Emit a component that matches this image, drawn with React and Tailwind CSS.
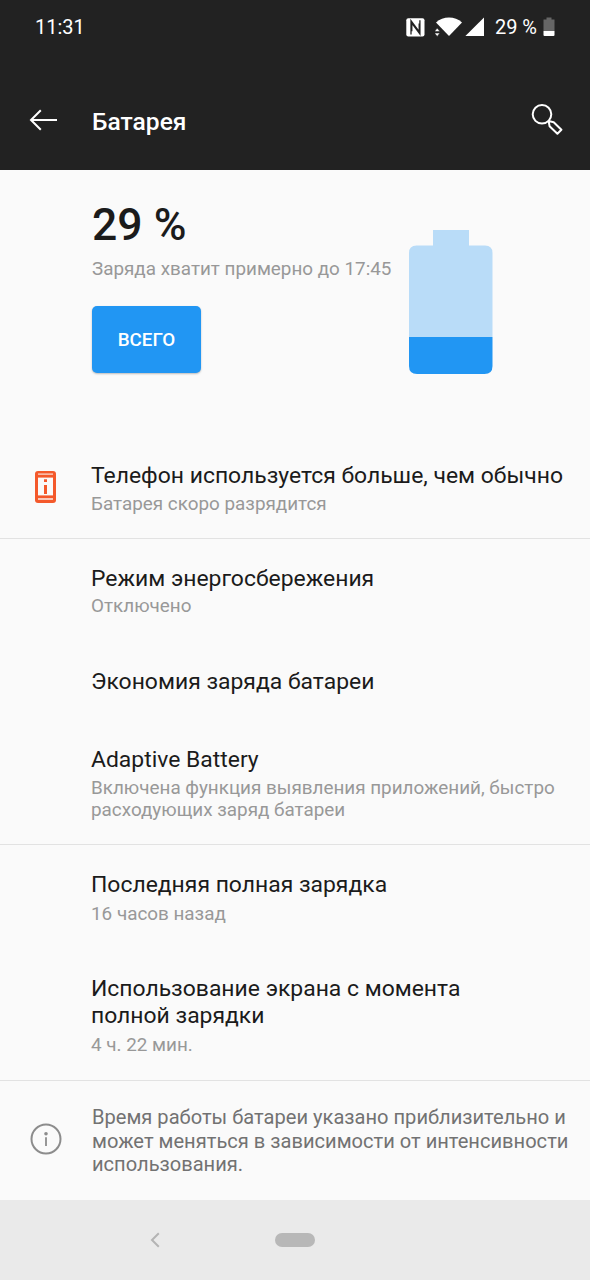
import React from "react";

const items = [
  {
    title: "Телефон используется больше, чем обычно",
    text: "Батарея скоро разрядится",
    icon: true,
    box: "h-[103px] border-b",
    textBox: "mt-[4px] leading-[22px]",
  },
  {
    title: "Режим энергосбережения",
    text: "Отключено",
    box: "h-[103px]",
    textBox: "mt-[3px] leading-[22px]",
  },
  { title: "Экономия заряда батареи", box: "h-[78px]" },
  {
    title: "Adaptive Battery",
    text: "Включена функция выявления приложений, быстро расходующих заряд батареи",
    box: "h-[125px] border-b",
    textBox: "mt-[4px] leading-[22px]",
  },
  {
    title: "Последняя полная зарядка",
    text: "16 часов назад",
    box: "h-[104px]",
    textBox: "mt-[4px] leading-[24px]",
  },
  {
    title: "Использование экрана с момента полной зарядки",
    text: "4 ч. 22 мин.",
    box: "h-[132px] border-b",
    titleBox: "w-[400px]",
    textBox: "mt-[4px] leading-[24px]",
  },
];

const StatusBar = () => (
  <div className="flex h-[54px] items-center pl-[35px] pr-[35px] text-[20px] text-white">
    <span>11:31</span>
    <svg className="ml-auto" width="19" height="19" viewBox="0 0 19 19">
      <rect x="0.3" y="0.3" width="18.2" height="18.2" rx="2" fill="#fff" />
      <path
        d="M5 16.6V2.6L13.2 13.6V5.5M13.9 2.2V16L5.8 5.2V13.2"
        fill="none"
        stroke="#222"
        strokeWidth="1.3"
      />
    </svg>
    <svg className="ml-[10px]" width="28" height="20" viewBox="0 0 28 20">
      <path d="M1 5.6C8-1.2 20-1.2 27 5.6L14 19Z" fill="#fff" />
      <path
        d="M-0.6 14.6L2.2 11L5 14.6ZM-0.6 16H5L2.2 19.4Z"
        fill="#fff"
        stroke="#222"
        strokeWidth="0.6"
      />
    </svg>
    <svg className="ml-[2px]" width="20" height="20" viewBox="0 0 20 20">
      <path d="M19 0.4V19H0.4Z" fill="#fff" />
    </svg>
    <span className="ml-[10px]">29 %</span>
    <svg className="ml-[6px]" width="12" height="20" viewBox="0 0 12 20">
      <path d="M3.5 0.5H8.5V2.5H11.5V14H0.5V2.5H3.5Z" fill="#666" />
      <path d="M0.5 14H11.5V18Q11.5 19 10.5 19H1.5Q0.5 19 0.5 18Z" fill="#fff" />
    </svg>
  </div>
);

const AppBar = () => (
  <div className="flex h-[116px] items-start pl-[29px] pr-[27px] pt-[49px] text-white">
    <svg className="mt-[6px]" width="30" height="22" viewBox="0 0 30 22">
      <path
        d="M28 11H2M11.8 1.3L2 11L11.8 20.7"
        fill="none"
        stroke="#fff"
        strokeWidth="2"
      />
    </svg>
    <h1 className="ml-[33px] mt-[3px] text-[24.6px] font-medium leading-[32px]">
      Батарея
    </h1>
    <svg className="ml-auto" width="32" height="32" viewBox="0 0 32 32">
      <g fill="none" stroke="#fff" strokeWidth="2">
        <circle cx="11" cy="11.3" r="9.3" />
        <path
          d="M17.6 18L18.6 23.2L26.4 30.8L30.4 26.8L22.7 19.2L17.6 18Z"
          strokeLinejoin="round"
        />
      </g>
    </svg>
  </div>
);

const Summary = () => (
  <section className="flex h-[266px] pl-[92px]">
    <div className="w-[317px] pt-[29px]">
      <p className="text-[44.5px] font-medium leading-[52px] text-[#1b1b1b]">
        29 %
      </p>
      <p className="mt-[6px] whitespace-nowrap text-[18.85px] leading-[24px] text-[#989898]">
        Заряда хватит примерно до 17:45
      </p>
      <button className="mt-[25px] h-[67px] w-[109px] rounded-[5px] bg-[#2196f3] pt-[2px] text-[18.8px] font-medium text-white shadow-[0_1px_2px_rgba(0,0,0,0.25)]">
        ВСЕГО
      </button>
    </div>
    <svg className="mt-[60px]" width="84" height="144" viewBox="0 0 84 144">
      <path
        d="M24 0H60V15.5H76Q83.5 15.5 83.5 23V107H0V23Q0 15.5 7.5 15.5H24Z"
        fill="#b9dcf8"
      />
      <path d="M0 107H83.5V136Q83.5 144 75.5 144H8Q0 144 0 136Z" fill="#2196f3" />
    </svg>
  </section>
);

const PhoneInfoIcon = () => (
  <svg className="mt-[35px]" width="21" height="32" viewBox="0 0 21 32">
    <rect width="21" height="32" rx="3" fill="#f4592b" />
    <path d="M3 3.1H18" stroke="#fbe3db" strokeWidth="1.2" />
    <path d="M3 28H18" stroke="#fbe3db" strokeWidth="1.6" />
    <rect x="3" y="6.6" width="15" height="17.8" fill="#fafafa" />
    <path d="M9 8.2H12V11H9ZM9 14H12V23H9Z" fill="#f4592b" />
  </svg>
);

const Row = ({ title, text, icon, box, titleBox = "", textBox }) => (
  <li className={`flex border-[#e2e2e2] ${box}`}>
    <div className="w-[91px] shrink-0 pl-[35px]">{icon && <PhoneInfoIcon />}</div>
    <div className="flex-1 pt-[26px]">
      <p className={`text-[22.92px] leading-[27px] text-[#1b1b1b] ${titleBox}`}>
        {title}
      </p>
      {text && (
        <p className={`w-[480px] text-[18.88px] text-[#989898] ${textBox}`}>
          {text}
        </p>
      )}
    </div>
  </li>
);

const Footer = () => (
  <div className="flex h-[119px] pl-[30px]">
    <svg className="mt-[42px]" width="32" height="32" viewBox="0 0 32 32">
      <circle cx="16" cy="16" r="14.5" fill="none" stroke="#8c8c8c" strokeWidth="2" />
      <circle cx="16" cy="10.8" r="1.8" fill="#8c8c8c" />
      <path d="M16 14.2V23" stroke="#8c8c8c" strokeWidth="1.8" />
    </svg>
    <p className="ml-[30px] w-[485px] pt-[25px] text-[20.1px] leading-[23.5px] text-[#727272]">
      Время работы батареи указано приблизительно и может меняться в зависимости
      от интенсивности использования.
    </p>
  </div>
);

const NavBar = () => (
  <nav className="flex h-[80px] items-center bg-[#eaeaea] pl-[150px]">
    <svg width="10" height="16" viewBox="0 0 10 16">
      <path d="M8.8 1.3L2 8L8.8 14.7" fill="none" stroke="#b4b4b4" strokeWidth="2" />
    </svg>
    <div className="ml-[115px] h-[14px] w-[40px] rounded-full bg-[#b8b8b8]" />
  </nav>
);

const App = () => {
  return (
    <div className="h-[1280px] w-[590px] overflow-hidden bg-[#fafafa] font-['Roboto',sans-serif]">
      <header className="bg-[#222222]">
        <StatusBar />
        <AppBar />
      </header>
      <main>
        <Summary />
        <ul>
          {items.map((item) => (
            <Row key={item.title} {...item} />
          ))}
        </ul>
        <Footer />
      </main>
      <NavBar />
    </div>
  );
};

export default App;
